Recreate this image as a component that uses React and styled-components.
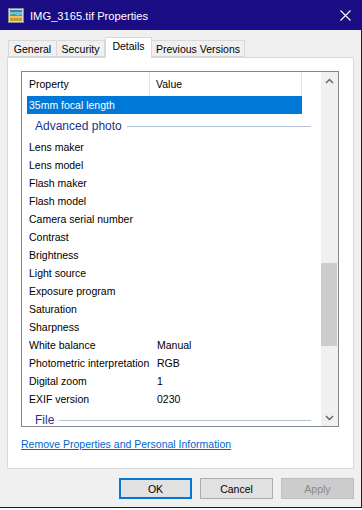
import styled, { createGlobalStyle } from "styled-components";

const GlobalStyle = createGlobalStyle`
    html, body {
        margin: 0;
        padding: 0;
        background: #fbfbfb;
    }
    body {
        font-family: "Liberation Sans", Arial, sans-serif;
        font-size: 10.5px;
        color: #000;
    }
`;

const tabs = [
    { label: "General", width: 49 },
    { label: "Security", width: 48 },
    { label: "Details", width: 47, active: true },
    { label: "Previous Versions", width: 93 },
];

const rows = [
    ["Lens maker", ""],
    ["Lens model", ""],
    ["Flash maker", ""],
    ["Flash model", ""],
    ["Camera serial number", ""],
    ["Contrast", ""],
    ["Brightness", ""],
    ["Light source", ""],
    ["Exposure program", ""],
    ["Saturation", ""],
    ["Sharpness", ""],
    ["White balance", "Manual"],
    ["Photometric interpretation", "RGB"],
    ["Digital zoom", "1"],
    ["EXIF version", "0230"],
];

function PictureIcon() {
    return (
        <svg width="16" height="15" viewBox="0 0 16 15">
            <rect x="0.5" y="0.5" width="15" height="14" fill="#d8d8d8" stroke="#8c8c8c" />
            <rect x="2" y="2" width="12" height="5" fill="#3a7fc8" />
            <rect x="2" y="4" width="12" height="3" fill="#6cc0e0" />
            <rect x="2" y="7" width="12" height="6" fill="#e8c452" />
            <rect x="2" y="10" width="12" height="3" fill="#c89a3a" />
            <path d="M2 7 L6 6 L10 7.5 L14 6.5 L14 8 L2 8 Z" fill="#5a9a4a" />
        </svg>
    );
}

function Chevron({ down }) {
    return (
        <svg width="9" height="6" viewBox="0 0 9 6">
            <path
                d={down ? "M1 1 L4.5 4.5 L8 1" : "M1 5 L4.5 1.5 L8 5"}
                fill="none"
                stroke="#606060"
                strokeWidth="1.4"
            />
        </svg>
    );
}

export default function App() {
    return (
        <>
            <GlobalStyle />
            <Window>
                <TitleBar>
                    <TitleIcon>
                        <PictureIcon />
                    </TitleIcon>
                    <Title>IMG_3165.tif Properties</Title>
                    <Close>
                        <svg width="11" height="11" viewBox="0 0 11 11">
                            <path d="M0.5 0.5 L10.5 10.5 M10.5 0.5 L0.5 10.5" stroke="#fff" strokeWidth="1.1" />
                        </svg>
                    </Close>
                </TitleBar>
                <Body>
                    <TabStrip>
                        {tabs.map((t) => (
                            <Tab key={t.label} $active={t.active} $width={t.width}>
                                {t.label}
                            </Tab>
                        ))}
                    </TabStrip>
                    <Panel>
                        <ListView>
                            <ListContent>
                                <Header>
                                    <HeaderCell $width={128}>Property</HeaderCell>
                                    <HeaderCell $width={152} $pad={6}>Value</HeaderCell>
                                </Header>
                                <Row $selected>
                                    <Cell>35mm focal length</Cell>
                                    <ValueCell></ValueCell>
                                </Row>
                                <Group>
                                    <span>Advanced photo</span>
                                    <GroupLine />
                                </Group>
                                {rows.map(([name, value]) => (
                                    <Row key={name}>
                                        <Cell>{name}</Cell>
                                        <ValueCell>{value}</ValueCell>
                                    </Row>
                                ))}
                                <Group>
                                    <span>File</span>
                                    <GroupLine />
                                </Group>
                            </ListContent>
                            <ScrollBar>
                                <Arrow>
                                    <Chevron />
                                </Arrow>
                                <Track>
                                    <Thumb />
                                </Track>
                                <Arrow>
                                    <Chevron down />
                                </Arrow>
                            </ScrollBar>
                        </ListView>
                        <LinkRow>
                            <RemoveLink href="#">Remove Properties and Personal Information</RemoveLink>
                        </LinkRow>
                    </Panel>
                    <Footer>
                        <Button $default>OK</Button>
                        <Button>Cancel</Button>
                        <Button disabled>Apply</Button>
                    </Footer>
                </Body>
            </Window>
        </>
    );
}

const Window = styled.div`
    width: 361px;
    height: 507px;
    border-right: 1px solid #1a0c82;
    border-bottom: 1px solid #1a0c82;
    display: flex;
    flex-direction: column;
    background: #f0f0f0;
`;

const TitleBar = styled.div`
    height: 30px;
    background: #1a0c82;
    display: flex;
    align-items: center;
    color: #fff;
`;

const TitleIcon = styled.div`
    display: flex;
    margin-left: 8px;
    margin-right: 6px;
    margin-top: 1px;
`;

const Title = styled.div`
    flex: 1;
    font-size: 11.2px;
    margin-top: 1px;
`;

const Close = styled.div`
    width: 30px;
    display: flex;
    justify-content: center;
    margin-right: 1px;
    margin-top: 0px;
`;

const Body = styled.div`
    flex: 1;
    display: flex;
    flex-direction: column;
`;

const TabStrip = styled.div`
    height: 20px;
    margin-top: 7px;
    padding-left: 8px;
    display: flex;
    align-items: flex-end;
    position: relative;
    z-index: 1;
`;

const Tab = styled.div`
    box-sizing: border-box;
    width: ${(p) => p.$width}px;
    height: ${(p) => (p.$active ? 21 : 17)}px;
    margin-bottom: ${(p) => (p.$active ? -1 : 0)}px;
    border: 1px solid #d9d9d9;
    border-left-width: ${(p) => (p.$active ? 1 : 0)}px;
    border-bottom: ${(p) => (p.$active ? "none" : "1px solid #d9d9d9")};
    background: ${(p) => (p.$active ? "#fff" : "#f0f0f0")};
    display: flex;
    justify-content: center;
    align-items: ${(p) => (p.$active ? "flex-start" : "center")};
    padding-top: ${(p) => (p.$active ? 2 : 0)}px;
    &:first-child {
        border-left-width: 1px;
    }
`;

const Panel = styled.div`
    box-sizing: border-box;
    margin: 0 7px;
    height: 412px;
    background: #fff;
    border: 1px solid #d9d9d9;
    padding: 13px 14px 0 13px;
    display: flex;
    flex-direction: column;
`;

const ListView = styled.div`
    box-sizing: border-box;
    width: 318px;
    height: 356px;
    border: 1px solid #828790;
    display: flex;
`;

const ListContent = styled.div`
    flex: 1;
    overflow: hidden;
`;

const Header = styled.div`
    display: flex;
    height: 24px;
`;

const HeaderCell = styled.div`
    box-sizing: border-box;
    width: ${(p) => p.$width}px;
    padding-left: ${(p) => p.$pad ?? 7}px;
    border-right: 1px solid #e5e5e5;
    display: flex;
    align-items: center;
`;

const Row = styled.div`
    display: flex;
    height: 18px;
    width: 275px;
    margin-left: 5px;
    align-items: center;
    background: ${(p) => (p.$selected ? "#0078d7" : "transparent")};
    color: ${(p) => (p.$selected ? "#fff" : "#000")};
`;

const Cell = styled.div`
    width: 124px;
    padding-left: 2px;
    white-space: nowrap;
`;

const ValueCell = styled.div`
    padding-left: 4px;
`;

const Group = styled.div`
    height: 24px;
    display: flex;
    align-items: center;
    padding-left: 13px;
    padding-right: 10px;
    color: #1e3287;
    font-size: 12px;
    gap: 5px;
`;

const GroupLine = styled.div`
    flex: 1;
    height: 1px;
    background: #b4c2da;
    margin-top: 1px;
`;

const ScrollBar = styled.div`
    width: 17px;
    background: #f0f0f0;
    display: flex;
    flex-direction: column;
`;

const Arrow = styled.div`
    height: 17px;
    display: flex;
    align-items: center;
    justify-content: center;
`;

const Track = styled.div`
    flex: 1;
    display: flex;
    flex-direction: column;
    padding-top: 174px;
`;

const Thumb = styled.div`
    height: 83px;
    margin: 0 1px 0 0;
    background: #cdcdcd;
`;

const LinkRow = styled.div`
    margin-top: 11px;
`;

const RemoveLink = styled.a`
    color: #0066cc;
    text-decoration: underline;
    font-size: 10.5px;
`;

const Footer = styled.div`
    display: flex;
    justify-content: flex-end;
    gap: 8px;
    padding: 9px 7px 0 0;
`;

const Button = styled.button`
    box-sizing: border-box;
    width: 73px;
    height: 21px;
    font-family: "Liberation Sans", Arial, sans-serif;
    font-size: 10.5px;
    padding: 0;
    background: ${(p) => (p.disabled ? "#cccccc" : "#e1e1e1")};
    color: ${(p) => (p.disabled ? "#8a8a8a" : "#000")};
    border: ${(p) =>
        p.$default ? "2px solid #0078d7" : p.disabled ? "1px solid #bfbfbf" : "1px solid #adadad"};
`;
